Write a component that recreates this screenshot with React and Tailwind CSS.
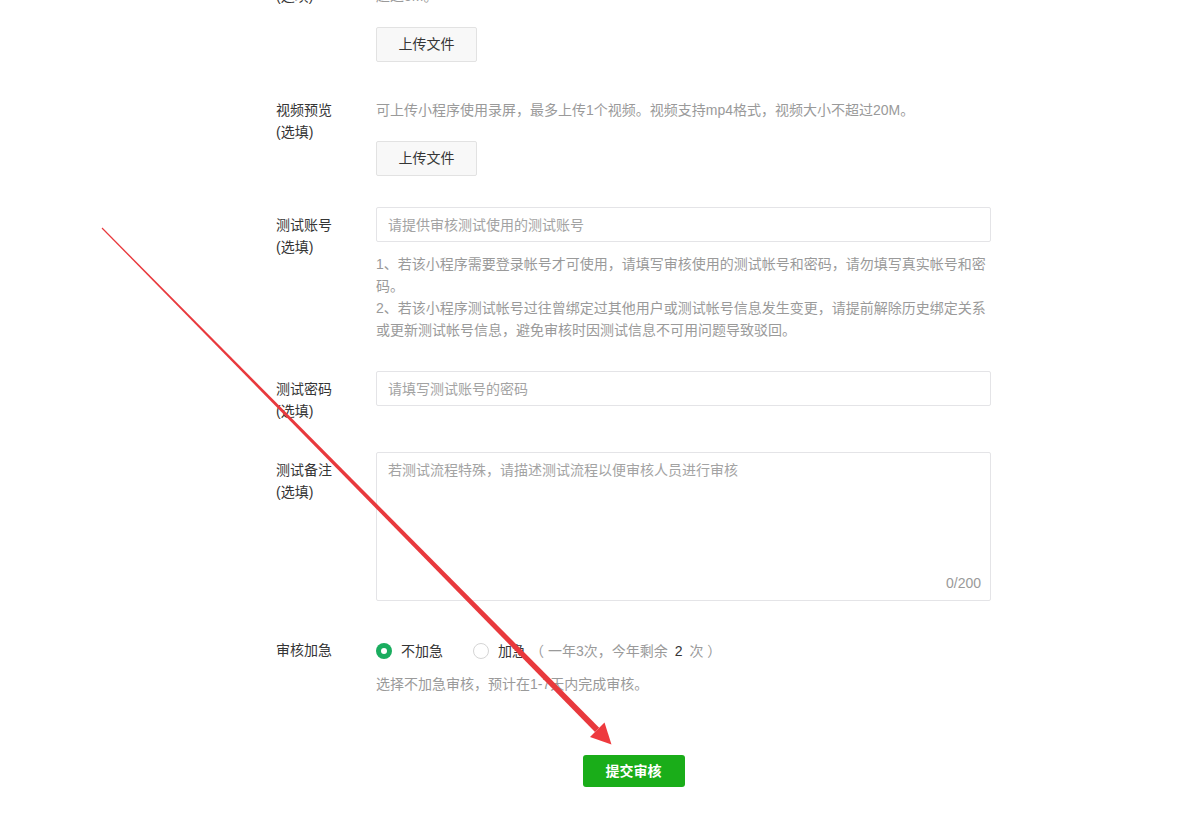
import React from "react"

const FONT = { fontFamily: '"Liberation Sans", "Noto Sans CJK SC", sans-serif' }

function Row({ label, children, className = "" }) {
  return (
    <div className={`flex ${className}`}>
      <div className="w-[100px] shrink-0 pt-[7px] leading-[22px] text-[#353535]">
        {label}
      </div>
      <div className="w-[615px]">{children}</div>
    </div>
  )
}

function UploadButton() {
  return (
    <button className="w-[101px] h-[35px] rounded-[2px] border border-[#e2e2e2] bg-[#f8f8f8] text-[14px] text-[#353535]">
      上传文件
    </button>
  )
}

function Radio({ checked, children }) {
  return (
    <label className="flex items-center gap-[9px] cursor-pointer">
      {checked ? (
        <span className="w-[16px] h-[16px] rounded-full bg-[#1aad5f] flex items-center justify-center">
          <span className="w-[6px] h-[6px] rounded-full bg-white" />
        </span>
      ) : (
        <span className="w-[16px] h-[16px] rounded-full border border-[#d5d5d5] bg-white" />
      )}
      {children}
    </label>
  )
}

function Arrow() {
  // annotation drawn over the screenshot
  return (
    <svg
      className="absolute top-0 left-0 pointer-events-none"
      width="1177"
      height="816"
      viewBox="0 0 1177 816"
    >
      <polygon
        points="102.4,227.6 101.6,228.4 595.0,732.0 599.2,727.8"
        fill="#e8393d"
      />
      <polygon points="590,737 604.5,722.5 611.5,744.5" fill="#ee3a3e" />
    </svg>
  )
}

export default function App() {
  return (
    <div className="relative min-h-[816px] overflow-hidden bg-white text-[14px]" style={FONT}>
      <div className="ml-[276px] w-[715px] -mt-[44px] flex flex-col gap-[30px]">
        <Row label={<>图片预览<br />(选填)</>}>
          <div className="pt-[7px] leading-[22px] text-[#9a9a9a]">
            可上传小程序截图，最多上传10张图片，图片支持png、jpg格式，图片大小不
            <br />
            超过5M。
          </div>
          <div className="mt-[20px]">
            <UploadButton />
          </div>
        </Row>

        <Row label={<>视频预览<br />(选填)</>}>
          <div className="pt-[7px] leading-[22px] text-[#9a9a9a]">
            可上传小程序使用录屏，最多上传1个视频。视频支持mp4格式，视频大小不超过20M。
          </div>
          <div className="mt-[20px]">
            <UploadButton />
          </div>
        </Row>

        <Row label={<>测试账号<br />(选填)</>} className="mt-[1px]">
          <input
            className="w-full h-[35px] rounded-[2px] border border-[#e4e4e7] px-[11px] outline-none placeholder:text-[#a3a3a3]"
            placeholder="请提供审核测试使用的测试账号"
          />
          <div className="mt-[11px] leading-[22px] text-[#9a9a9a]">
            <p>1、若该小程序需要登录帐号才可使用，请填写审核使用的测试帐号和密码，请勿填写真实帐号和密码。</p>
            <p>2、若该小程序测试帐号过往曾绑定过其他用户或测试帐号信息发生变更，请提前解除历史绑定关系或更新测试帐号信息，避免审核时因测试信息不可用问题导致驳回。</p>
          </div>
        </Row>

        <Row label={<>测试密码<br />(选填)</>}>
          <input
            className="w-full h-[35px] rounded-[2px] border border-[#e4e4e7] px-[11px] outline-none placeholder:text-[#a3a3a3]"
            placeholder="请填写测试账号的密码"
          />
        </Row>

        <Row label={<>测试备注<br />(选填)</>}>
          <div className="relative h-[149px] rounded-[2px] border border-[#e4e4e7]">
            <textarea
              className="w-full h-full resize-none px-[11px] pt-[6px] leading-[22px] outline-none placeholder:text-[#a3a3a3] bg-transparent"
              placeholder="若测试流程特殊，请描述测试流程以便审核人员进行审核"
            />
            <span className="absolute right-[9px] bottom-[6px] leading-[22px] text-[#9a9a9a]">0/200</span>
          </div>
        </Row>

        <Row label="审核加急" className="mt-[1px]">
          <div className="pt-[8px] leading-[22px] flex items-center gap-[30px] text-[#353535]">
            <Radio checked>不加急</Radio>
            <Radio>
              <span>
                加急
                <span className="text-[#9a9a9a] ml-[4px]">
                  （ 一年3次，今年剩余
                  <span className="text-[#353535] mx-[7px]">2</span>
                  次 ）
                </span>
              </span>
            </Radio>
          </div>
          <div className="mt-[11px] leading-[22px] text-[#9a9a9a]">
            选择不加急审核，预计在1-7天内完成审核。
          </div>
        </Row>

        <div className="flex justify-center mt-[30px]">
          <button className="w-[102px] h-[32px] rounded-[3px] bg-[#1aad19] text-white font-bold text-[14px]">
            提交审核
          </button>
        </div>
      </div>
      <Arrow />
    </div>
  )
}
